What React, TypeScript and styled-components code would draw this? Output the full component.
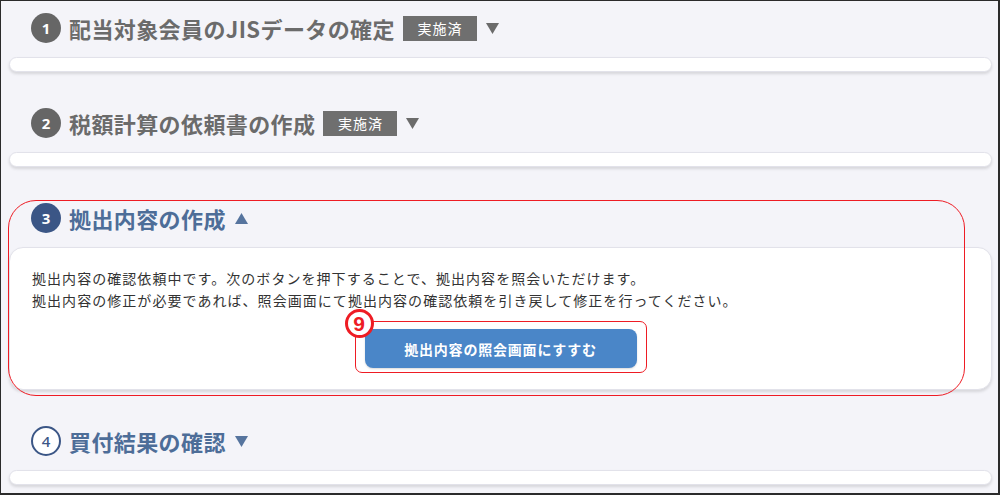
import React, { FC } from "react";
import styled, { createGlobalStyle } from "styled-components";

const GlobalStyle = createGlobalStyle`
  html, body {
    margin: 0;
    padding: 0;
    background: #2b2b2b;
  }
  * {
    box-sizing: border-box;
  }
`;

const Frame = styled.div`
  width: 1000px;
  height: 495px;
  overflow: hidden;
  background-color: #f4f4f9;
  border-style: solid;
  border-color: #2b2b2b;
  border-width: 1px 2px 2px 1px;
  padding: 5px 6px 0 8px;
  font-family: "Noto Sans CJK JP", "Noto Sans", sans-serif;
  display: flex;
  flex-direction: column;
  gap: 29px;
`;

const Section = styled.section`
  position: relative;
  display: flex;
  flex-direction: column;
  gap: 7px;
`;

const Header = styled.div`
  display: flex;
  flex-direction: row;
  align-items: center;
  height: 44px;
  padding-left: 22px;
`;

type Tone = "done" | "active" | "todo";

const StepNumber = styled.div<{ $tone: Tone }>`
  display: flex;
  justify-content: center;
  align-items: center;
  width: 30px;
  height: 30px;
  border-radius: 50%;
  font-size: 15px;
  font-family: "Noto Sans", sans-serif;
  margin-right: 8px;
  background-color: ${(p) =>
    p.$tone === "done" ? "#666666" : p.$tone === "active" ? "#3b5686" : "#ffffff"};
  color: ${(p) => (p.$tone === "todo" ? "#3b5686" : "#ffffff")};
  border: ${(p) => (p.$tone === "todo" ? "2px solid #3b5686" : "none")};
  font-weight: ${(p) => (p.$tone === "todo" ? 500 : 700)};
`;

const Title = styled.h2<{ $tone: Tone }>`
  margin: 0;
  font-size: 22px;
  font-weight: 700;
  letter-spacing: 0.4px;
  color: ${(p) => (p.$tone === "done" ? "#6b6b6b" : "#4d6d98")};
`;

const Badge = styled.span`
  display: inline-flex;
  justify-content: center;
  align-items: center;
  width: 74px;
  height: 25px;
  margin-left: 8px;
  background-color: #6f6f6f;
  color: #ffffff;
  font-size: 14px;
  letter-spacing: 1px;
`;

const Arrow = styled.svg`
  margin-left: 9px;
  width: 13px;
  height: 11px;
`;

const Card = styled.div<{ $open?: boolean }>`
  background-color: #ffffff;
  border: 1px solid #e2e2ea;
  border-radius: ${(p) => (p.$open ? "14px" : "8px")};
  box-shadow: 0 2px 3px rgba(0, 0, 0, 0.12);
  height: ${(p) => (p.$open ? "143px" : "15px")};
  padding: ${(p) => (p.$open ? "19px 22px 0 22px" : "0")};
  display: flex;
  flex-direction: column;
`;

const Message = styled.p`
  margin: 0;
  font-size: 14px;
  line-height: 22px;
  letter-spacing: 1.05px;
  color: #333333;
`;

const ButtonRow = styled.div`
  display: flex;
  justify-content: center;
  margin-top: 18px;
`;

const ButtonWrap = styled.div`
  position: relative;
  display: inline-flex;
`;

const PrimaryButton = styled.button`
  width: 272px;
  height: 39px;
  border: none;
  border-radius: 8px;
  background-color: #4a86c8;
  color: #ffffff;
  font-family: "Noto Sans CJK JP", sans-serif;
  font-size: 14px;
  font-weight: 700;
  letter-spacing: 0.8px;
  box-shadow: 0 1px 2px rgba(0, 0, 0, 0.15);
`;

// red annotation marks drawn over the screenshot
const SectionMark = styled.div`
  position: absolute;
  top: 4px;
  left: -1px;
  width: 957px;
  height: 196px;
  border: 1.5px solid #ee1c24;
  border-radius: 28px;
  pointer-events: none;
`;

const ButtonMark = styled.div`
  position: absolute;
  top: -8px;
  left: -10px;
  right: -10px;
  bottom: -5px;
  border: 1.5px solid #ee1c24;
  border-radius: 7px;
  pointer-events: none;
`;

const NumberMark = styled.div`
  position: absolute;
  top: -20px;
  left: -20px;
  width: 29px;
  height: 29px;
  border-radius: 50%;
  border: 3.5px solid #ee1c24;
  background-color: #ffffff;
  color: #ee1c24;
  display: flex;
  justify-content: center;
  align-items: center;
  font-family: "Liberation Sans", sans-serif;
  font-size: 21px;
  font-weight: 700;
`;

interface StepProps {
  no: number;
  title: string;
  tone: Tone;
  open?: boolean;
  children?: React.ReactNode;
}

const Step: FC<StepProps> = ({ no, title, tone, open, children }) => {
  const color = tone === "done" ? "#6b6b6b" : "#56749e";
  return (
    <Section>
      <Header>
        <StepNumber $tone={tone}>{no}</StepNumber>
        <Title $tone={tone}>{title}</Title>
        {tone === "done" && <Badge>実施済</Badge>}
        <Arrow viewBox="0 0 13 11">
          {open ? (
            <polygon points="0,11 13,11 6.5,0" fill={color} />
          ) : (
            <polygon points="0,0 13,0 6.5,11" fill={color} />
          )}
        </Arrow>
      </Header>
      <Card $open={open}>{children}</Card>
      {open && <SectionMark />}
    </Section>
  );
};

const App: FC = () => {
  return (
    <>
      <GlobalStyle />
      <Frame>
        <Step no={1} title="配当対象会員のJISデータの確定" tone="done" />
        <Step no={2} title="税額計算の依頼書の作成" tone="done" />
        <Step no={3} title="拠出内容の作成" tone="active" open>
          <Message>
            拠出内容の確認依頼中です。次のボタンを押下することで、拠出内容を照会いただけます。
          </Message>
          <Message>
            拠出内容の修正が必要であれば、照会画面にて拠出内容の確認依頼を引き戻して修正を行ってください。
          </Message>
          <ButtonRow>
            <ButtonWrap>
              <PrimaryButton>拠出内容の照会画面にすすむ</PrimaryButton>
              <ButtonMark />
              <NumberMark>9</NumberMark>
            </ButtonWrap>
          </ButtonRow>
        </Step>
        <Step no={4} title="買付結果の確認" tone="todo" />
      </Frame>
    </>
  );
};

export default App;
